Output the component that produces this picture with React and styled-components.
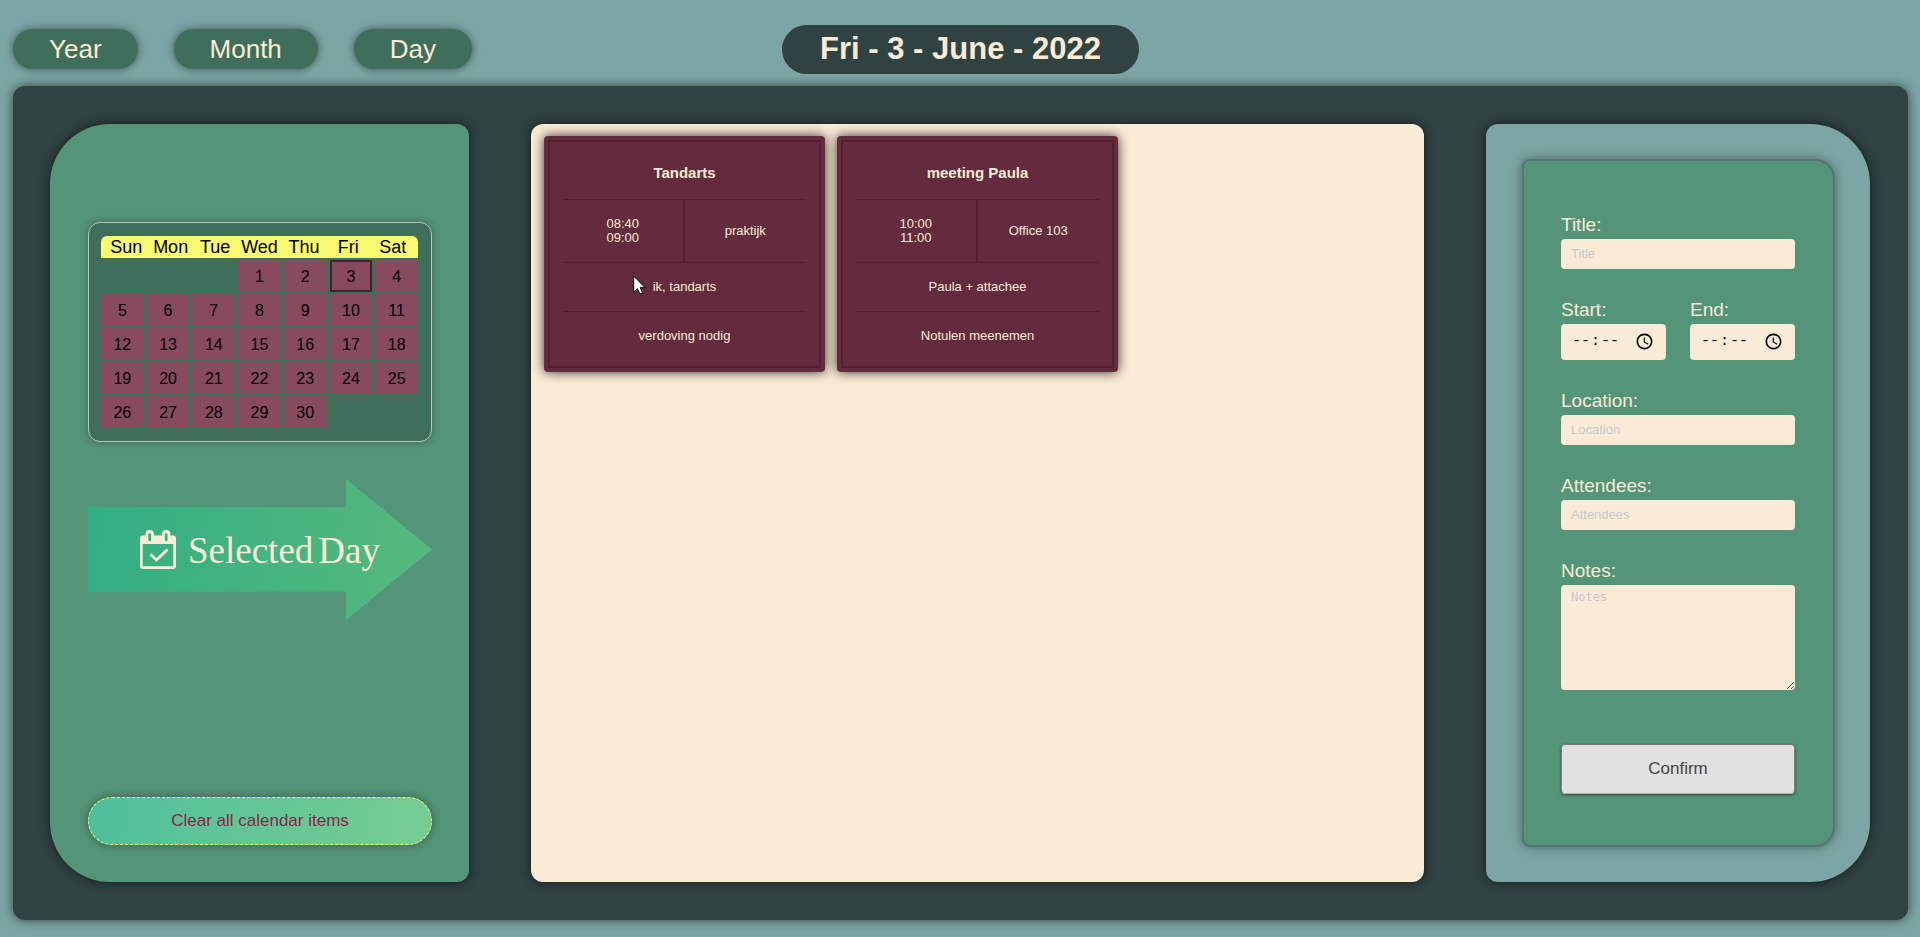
import React, { useState } from "react";
import styled, { createGlobalStyle, css } from "styled-components";

const GlobalStyle = createGlobalStyle`
  *, *::before, *::after { box-sizing: border-box; }
  body {
    margin: 0;
    background: #7ca6a5;
    color: #faebd7;
    font-family: "Liberation Sans", Arial, sans-serif;
  }
  button, input { font-family: inherit; }
  button { cursor: pointer; }
`;

const Page = styled.div`
  display: flex;
  flex-direction: column;
  min-height: 100vh;
  padding: 25px 12px 17px 13px;
`;

const Header = styled.header`
  display: grid;
  grid-template-columns: 1fr auto 1fr;
  align-items: center;
  margin-bottom: 12px;
`;

const Nav = styled.nav`
  display: flex;
  gap: 36px;
  padding-bottom: 1px;
`;

const NavButton = styled.button`
  height: 40px;
  padding: 0 36px;
  border: 0;
  border-radius: 20px;
  background: #3f6f5a;
  color: #faebd7;
  font-size: 26px;
  line-height: 40px;
  box-shadow: 0 0 8px rgba(0, 0, 0, 0.5);
`;

const DateHeading = styled.h1`
  margin: 0;
  padding: 6px 38px 7px;
  border-radius: 25px;
  background: #314243;
  font-size: 31px;
  line-height: 36px;
`;

const Board = styled.main`
  flex: 1;
  display: grid;
  grid-template-columns: 419fr 893fr 384fr;
  gap: 62px;
  padding: 38px 38px 38px 37px;
  border-radius: 12px;
  background: #314243;
  box-shadow: 0 0 12px rgba(0, 0, 0, 0.6);
`;

const panel = css`
  min-width: 0;
  box-shadow: 0 0 12px rgba(0, 0, 0, 0.6);
`;

const SidePanel = styled.aside`
  ${panel}
  display: flex;
  flex-direction: column;
  padding: 98px 37px 37px 38px;
  border-radius: 60px 12px 12px 60px;
  background: #549478;
`;

const AgendaPanel = styled.section`
  ${panel}
  display: flex;
  flex-wrap: wrap;
  align-content: flex-start;
  gap: 12px;
  padding: 12px 12px 12px 13px;
  border-radius: 12px;
  background: #faebd7;
`;

const FormPanel = styled.section`
  ${panel}
  display: flex;
  padding: 35px 35px 35px 36px;
  border-radius: 12px 60px 60px 12px;
  background: #7ca6a5;
`;

const Calendar = styled.table`
  display: block;
  padding: 13px 13px 13px 12px;
  border: 1px solid #b9c3bb;
  border-radius: 12px;
  background: #3f6f5a;
  color: #000;
  box-shadow: 0 0 8px rgba(0, 0, 0, 0.3);
`;

const CalendarHead = styled.thead`
  display: block;
  margin-bottom: 2px;
  padding: 0 3px;
  border-radius: 6px 6px 0 0;
  background: #f9f972;
`;

const CalendarBody = styled.tbody`
  display: grid;
  gap: 2px;
`;

const Week = styled.tr`
  display: grid;
  grid-template-columns: repeat(7, 1fr);
  column-gap: ${(p) => (p.$spaced ? "3px" : "0")};
`;

const WeekdayName = styled.th`
  padding: 0;
  font-size: 18px;
  font-weight: 400;
  line-height: 22px;
  text-align: center;
`;

const DayCell = styled.td`
  padding: 0;
  height: 32px;
`;

const DayButton = styled.button`
  display: block;
  width: 100%;
  height: 32px;
  padding: 1px 0 0;
  border: 2px solid ${(p) => (p.$selected ? "#43222e" : "#884a5e")};
  background: #884a5e;
  color: #000;
  font-size: 16px;
`;

const ArrowButton = styled.button`
  display: flex;
  align-items: center;
  justify-content: center;
  gap: 12px;
  width: 100%;
  height: 141px;
  margin-top: 37px;
  padding: 0;
  border: 0;
  background: linear-gradient(100deg, #32ae84, #56b97c);
  clip-path: polygon(0 20%, 75% 20%, 75% 0, 100% 50%, 75% 100%, 75% 80%, 0 80%);
  color: #faebd7;
  font-family: "Liberation Serif", "Times New Roman", serif;
  font-size: 37px;
  line-height: 44px;
`;

const ArrowText = styled.span`
  display: flex;
  gap: 5px;
  padding-top: 3px;
`;

const ClearButton = styled.button`
  height: 48px;
  margin-top: auto;
  border: 1px dashed #f9f972;
  border-radius: 24px;
  background: linear-gradient(100deg, #4ebf9c, #77ce92);
  color: #8e1f4a;
  font-size: 17px;
  box-shadow: 0 0 8px rgba(0, 0, 0, 0.4);
`;

const Card = styled.article`
  position: relative;
  display: grid;
  grid-template-rows: 52px 63px 49px 48px;
  width: 281px;
  padding: 12px 19px;
  border-radius: 4px;
  background: #632b3d;
  outline: 2px solid #542031;
  outline-offset: -6px;
  box-shadow: 0 0 12px rgba(0, 0, 0, 0.8);
  font-size: 13px;
  line-height: 14px;
`;

const CardRow = styled.div`
  display: grid;
  grid-template-columns: ${(p) => (p.$split ? "1fr 1fr" : "1fr")};
  align-items: center;
  justify-items: center;
  border-bottom: ${(p) => (p.$last ? "0" : "1px solid #542031")};
`;

const CardTitle = styled.h2`
  margin: 0;
  padding-bottom: 2px;
  font-size: 15px;
  line-height: 18px;
`;

const Times = styled.div`
  display: flex;
  flex-direction: column;
  align-items: center;
  justify-content: center;
  align-self: stretch;
  justify-self: stretch;
  border-right: 2px solid #542031;
`;

const Pointer = styled.svg`
  position: absolute;
  left: 89px;
  top: 139px;
  width: 13px;
  height: 21px;
`;

const Form = styled.form`
  flex: 1;
  min-width: 0;
  display: flex;
  flex-direction: column;
  justify-content: center;
  gap: 29px;
  padding: 16px 38px 16px 37px;
  border: 2px solid #557673;
  border-radius: 8px 20px 20px 8px;
  background: #549478;
  box-shadow: 0 0 12px rgba(0, 0, 0, 0.4);
`;

const Field = styled.div`
  display: flex;
  flex-direction: column;
  gap: 2px;
  min-width: 0;
`;

const FieldPair = styled.div`
  display: grid;
  grid-template-columns: 1fr 1fr;
  gap: 24px;
`;

const Label = styled.label`
  font-size: 19px;
  line-height: 24px;
`;

const control = css`
  width: 100%;
  margin: 0;
  border: 0;
  border-radius: 4px;
  background: #faebd7;
  color: #000;
  &::placeholder { color: #c8c8c8; opacity: 1; }
`;

const TextInput = styled.input`
  ${control}
  height: 30px;
  padding: 0 10px;
  font-size: 13px;
`;

const TimeInput = styled.input`
  ${control}
  height: 36px;
  padding: 0 12px 0 10px;
  font-family: "Liberation Mono", monospace;
  font-size: 15px;
  &::-webkit-datetime-edit-ampm-field { display: none; }
  &::-webkit-calendar-picker-indicator { margin-left: 0; padding: 0; width: 19px; height: 19px; }
`;

const NotesInput = styled.textarea`
  ${control}
  display: block;
  height: 105px;
  padding: 5px 10px;
  font-family: "DejaVu Sans Mono", monospace;
  font-size: 12px;
  resize: both;
`;

const ConfirmButton = styled.button`
  height: 50px;
  margin-top: 25px;
  border: 1px solid #777f7b;
  border-bottom-color: #b0b0b0;
  border-radius: 4px;
  background: #e1e1e1;
  color: #444;
  font-size: 17px;
  box-shadow: 0 1px 3px rgba(0, 0, 0, 0.5);
`;

const weekdays = ["Sun", "Mon", "Tue", "Wed", "Thu", "Fri", "Sat"];
const firstWeekday = 3;
const daysInMonth = 30;
const weeks = Array.from({ length: 5 }, (_, w) =>
  weekdays.map((_, d) => {
    const day = w * 7 + d - firstWeekday + 1;
    return day >= 1 && day <= daysInMonth ? day : null;
  })
);

const appointments = [
  { title: "Tandarts", start: "08:40", end: "09:00", location: "praktijk", attendees: "ik, tandarts", notes: "verdoving nodig" },
  { title: "meeting Paula", start: "10:00", end: "11:00", location: "Office 103", attendees: "Paula + attachee", notes: "Notulen meenemen" },
];

function CalendarCheckIcon() {
  return (
    <svg width="36" height="39" viewBox="0 0 36 39" aria-hidden="true">
      <path
        fill="currentColor"
        fillRule="evenodd"
        d="M3 5.500H5.500V4a4.200 4 0 0 1 8.400 0V5.500H22V4a4.200 4 0 0 1 8.400 0V5.500H33a3 3 0 0 1 3 3V36a3 3 0 0 1-3 3H3a3 3 0 0 1-3-3V8.500a3 3 0 0 1 3-3ZM2.700 14V36.200H33.300V14ZM8.300 4.200V10q0 1 1 1h.8q1 0 1-1V4.200q0-1-1-1h-.8q-1 0-1 1ZM24.800 4.200V10q0 1 1 1h.8q1 0 1-1V4.200q0-1-1-1h-.8q-1 0-1 1Z"
      />
      <path fill="none" stroke="currentColor" strokeWidth="2.800" d="M10.500 24.200L16.500 30L27.500 19.500" />
    </svg>
  );
}

function PointerIcon() {
  return (
    <Pointer viewBox="0 0 13 21" aria-hidden="true">
      <path
        d="M.7 1V17.200L4.400 13.700L7 19.200L9.600 18L7.200 12.700H12.200Z"
        fill="#fff"
        stroke="#000"
        strokeLinejoin="round"
      />
    </Pointer>
  );
}

function AppointmentCard({ item, hovered }) {
  return (
    <Card>
      <CardRow><CardTitle>{item.title}</CardTitle></CardRow>
      <CardRow $split>
        <Times>
          <time>{item.start}</time>
          <time>{item.end}</time>
        </Times>
        <span>{item.location}</span>
      </CardRow>
      <CardRow>{item.attendees}</CardRow>
      <CardRow $last>{item.notes}</CardRow>
      {hovered && <PointerIcon />}
    </Card>
  );
}

function TextField({ id, label }) {
  return (
    <Field>
      <Label htmlFor={id}>{label}:</Label>
      <TextInput id={id} type="text" placeholder={label} />
    </Field>
  );
}

function TimeField({ id, label }) {
  return (
    <Field>
      <Label htmlFor={id}>{label}:</Label>
      <TimeInput id={id} type="time" />
    </Field>
  );
}

export default function App() {
  const [selected, setSelected] = useState(3);
  const heading = `${weekdays[(selected + firstWeekday - 1) % 7]} - ${selected} - June - 2022`;

  return (
    <Page>
      <GlobalStyle />
      <Header>
        <Nav>
          <NavButton type="button">Year</NavButton>
          <NavButton type="button">Month</NavButton>
          <NavButton type="button">Day</NavButton>
        </Nav>
        <DateHeading>{heading}</DateHeading>
      </Header>
      <Board>
        <SidePanel>
          <Calendar>
            <CalendarHead>
              <Week>
                {weekdays.map((name) => (
                  <WeekdayName key={name} scope="col">{name}</WeekdayName>
                ))}
              </Week>
            </CalendarHead>
            <CalendarBody>
              {weeks.map((week, w) => (
                <Week key={w} $spaced>
                  {week.map((day, d) => (
                    <DayCell key={d}>
                      {day && (
                        <DayButton type="button" $selected={day === selected} onClick={() => setSelected(day)}>
                          {day}
                        </DayButton>
                      )}
                    </DayCell>
                  ))}
                </Week>
              ))}
            </CalendarBody>
          </Calendar>
          <ArrowButton type="button">
            <CalendarCheckIcon />
            <ArrowText>
              <span>Selected</span>
              <span>Day</span>
            </ArrowText>
          </ArrowButton>
          <ClearButton type="button">Clear all calendar items</ClearButton>
        </SidePanel>
        <AgendaPanel>
          {appointments.map((item, i) => (
            <AppointmentCard key={item.title} item={item} hovered={i === 0} />
          ))}
        </AgendaPanel>
        <FormPanel>
          <Form onSubmit={(e) => e.preventDefault()}>
            <TextField id="title" label="Title" />
            <FieldPair>
              <TimeField id="start" label="Start" />
              <TimeField id="end" label="End" />
            </FieldPair>
            <TextField id="location" label="Location" />
            <TextField id="attendees" label="Attendees" />
            <Field>
              <Label htmlFor="notes">Notes:</Label>
              <NotesInput id="notes" placeholder="Notes" />
            </Field>
            <ConfirmButton type="submit">Confirm</ConfirmButton>
          </Form>
        </FormPanel>
      </Board>
    </Page>
  );
}
